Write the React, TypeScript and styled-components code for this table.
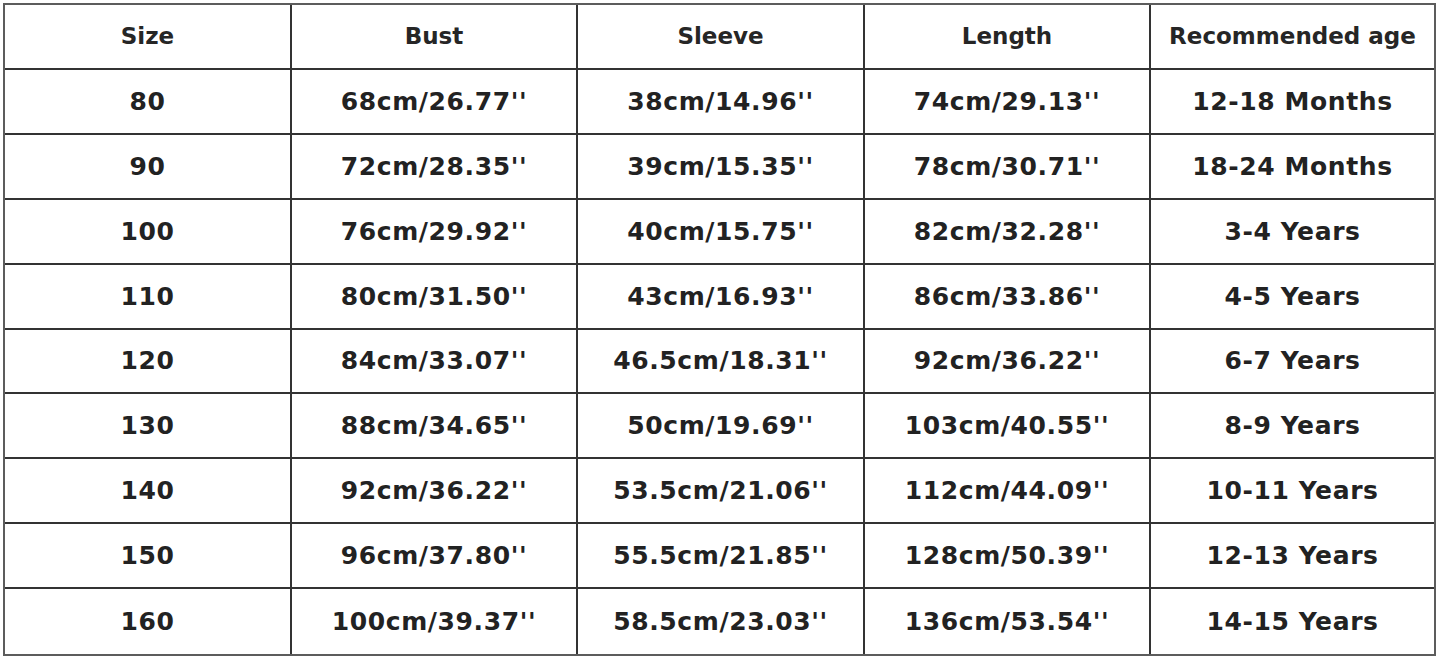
import React from 'react';
import styled, { createGlobalStyle } from 'styled-components';

const GlobalStyle = createGlobalStyle`
  html, body {
    margin: 0;
    padding: 0;
    background: #ffffff;
  }
  body {
    padding: 3px;
    font-family: "DejaVu Sans", "Liberation Sans", sans-serif;
  }
`;

const Table = styled.div`
  display: grid;
  grid-template-columns: 287px 286px 287px 286px 1fr;
  grid-template-rows: repeat(10, 1fr);
  width: 1433px;
  height: 653px;
  box-sizing: border-box;
  border: 2px solid #5c5c5c;
  background: #fff;
`;

const Cell = styled.div<{ $lastCol: boolean; $lastRow: boolean }>`
  display: flex;
  align-items: center;
  justify-content: center;
  border-right: ${p => (p.$lastCol ? 'none' : '2px solid #333')};
  border-bottom: ${p => (p.$lastRow ? 'none' : '2px solid #333')};
  color: #222;
  font-size: 25px;
  font-weight: 700;
  letter-spacing: 0.6px;
  white-space: nowrap;
`;

const HeadCell = styled(Cell)`
  font-size: 23px;
  letter-spacing: 0;
  color: #262626;
`;

const headers = ['Size', 'Bust', 'Sleeve', 'Length', 'Recommended age'];

const rows: string[][] = [
  ['80', "68cm/26.77''", "38cm/14.96''", "74cm/29.13''", '12-18 Months'],
  ['90', "72cm/28.35''", "39cm/15.35''", "78cm/30.71''", '18-24 Months'],
  ['100', "76cm/29.92''", "40cm/15.75''", "82cm/32.28''", '3-4 Years'],
  ['110', "80cm/31.50''", "43cm/16.93''", "86cm/33.86''", '4-5 Years'],
  ['120', "84cm/33.07''", "46.5cm/18.31''", "92cm/36.22''", '6-7 Years'],
  ['130', "88cm/34.65''", "50cm/19.69''", "103cm/40.55''", '8-9 Years'],
  ['140', "92cm/36.22''", "53.5cm/21.06''", "112cm/44.09''", '10-11 Years'],
  ['150', "96cm/37.80''", "55.5cm/21.85''", "128cm/50.39''", '12-13 Years'],
  ['160', "100cm/39.37''", "58.5cm/23.03''", "136cm/53.54''", '14-15 Years'],
];

export default function App() {
  return (
    <>
      <GlobalStyle />
      <Table>
        {headers.map((h, i) => (
          <HeadCell key={h} $lastCol={i === headers.length - 1} $lastRow={false}>
            {h}
          </HeadCell>
        ))}
        {rows.map((row, r) =>
          row.map((v, c) => (
            <Cell
              key={`${r}-${c}`}
              $lastCol={c === row.length - 1}
              $lastRow={r === rows.length - 1}
            >
              {v}
            </Cell>
          ))
        )}
      </Table>
    </>
  );
}
